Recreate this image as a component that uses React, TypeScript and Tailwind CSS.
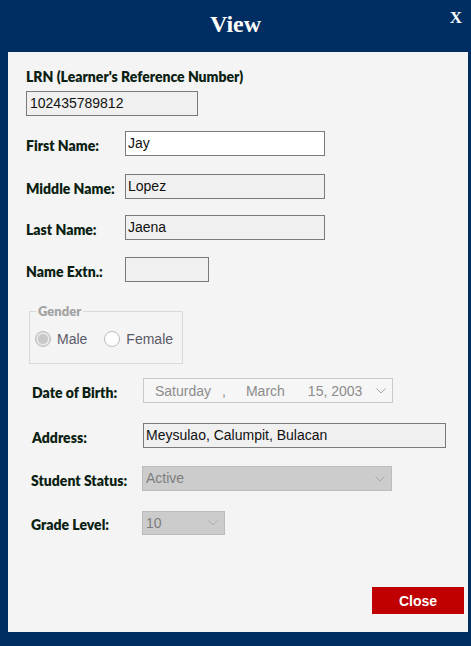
import React from 'react';

const labelCls = "font-['Lato','DejaVu_Sans',sans-serif] font-extrabold text-[14px] leading-[16px] text-[#0b1f12]";
const inputText = "font-['Liberation_Sans',Arial,sans-serif] text-[14px] text-[#111]";

const Chevron: React.FC<{ color?: string }> = ({ color = '#a8a8a8' }) => (
    <svg width="10" height="6" viewBox="0 0 10 6" className="shrink-0">
        <polyline points="0.5,0.5 5,5 9.5,0.5" fill="none" stroke={color} strokeWidth="1" />
    </svg>
);

const TextRow: React.FC<{ label: string; value: string; white?: boolean; width: string; top: string }> = ({ label, value, white, width, top }) => (
    <div className={`flex items-center h-[25px] ${top}`}>
        <div className={`${labelCls} w-[99px] pt-[5px]`}>{label}</div>
        <div className={`h-[25px] ${width} border border-[#7a7a7a] ${white ? 'bg-white' : 'bg-[#f0f0f0]'} px-[2px] flex items-center ${inputText}`}>
            {value}
        </div>
    </div>
);

const App: React.FC = () => {
    return (
        <div className="w-[471px] h-[646px] bg-[#002d62] flex flex-col overflow-hidden">
            {/* Title bar */}
            <div className="relative h-[52px] flex items-start justify-center shrink-0">
                <span className="mt-[10px] font-['Liberation_Serif','Times_New_Roman',serif] font-bold text-[24px] leading-[28px] text-white">
                    View
                </span>
                <button className="absolute right-[9px] top-[8px] font-['Liberation_Serif',serif] font-bold text-[17px] leading-[20px] text-white">
                    X
                </button>
            </div>

            {/* Body */}
            <div className="ml-[8px] w-[460px] h-[580px] bg-[#f4f4f4] flex flex-col pl-[18px]">
                <div className={`${labelCls} mt-[17px]`}>LRN (Learner's Reference Number)</div>
                <div className={`mt-[6px] h-[25px] w-[172px] border border-[#7a7a7a] bg-[#f0f0f0] px-[3px] flex items-center ${inputText}`}>
                    102435789812
                </div>

                <TextRow label="First Name:" value="Jay" white width="w-[200px]" top="mt-[15px]" />
                <TextRow label="Middle Name:" value="Lopez" width="w-[200px]" top="mt-[18px]" />
                <TextRow label="Last Name:" value="Jaena" width="w-[200px]" top="mt-[16px]" />
                <TextRow label="Name Extn.:" value="" width="w-[84px]" top="mt-[17px]" />

                {/* Gender */}
                <fieldset className="mt-[22px] ml-[3px] w-[154px] h-[60px] border border-[#d9d9d9]">
                    <legend className="ml-[6px] px-[2px] font-['Lato','DejaVu_Sans',sans-serif] font-extrabold text-[13px] leading-[15px] text-[#a3a3a3]">
                        Gender
                    </legend>
                    <div className="flex items-center h-[16px] mt-[12px] ml-[5px] font-['Liberation_Sans',Arial,sans-serif] text-[14px] text-[#5a5a68]">
                        <span className="w-[16px] h-[16px] rounded-full border border-[#bdbdbd] bg-[#c8c8c8] shadow-[inset_0_0_0_2px_#e6e6e6]" />
                        <span className="ml-[6px]">Male</span>
                        <span className="ml-[17px] w-[16px] h-[16px] rounded-full border border-[#bdbdbd] bg-white" />
                        <span className="ml-[6px]">Female</span>
                    </div>
                </fieldset>

                {/* Date of Birth */}
                <div className="flex items-center h-[25px] mt-[14px] ml-[6px]">
                    <div className={`${labelCls} w-[111px] pt-[5px]`}>Date of Birth:</div>
                    <div className="h-[25px] w-[250px] border border-[#c9c9c9] bg-[#f6f6f6] flex items-center pl-[11px] pr-[6px] pt-[1px] font-['Liberation_Sans',Arial,sans-serif] text-[14px] text-[#8c8c8c]">
                        <span>Saturday</span>
                        <span className="ml-[11px]">,</span>
                        <span className="ml-[20px]">March</span>
                        <span className="ml-[23px]">15, 2003</span>
                        <span className="ml-auto"><Chevron /></span>
                    </div>
                </div>

                {/* Address */}
                <div className="flex items-center h-[25px] mt-[20px] ml-[6px]">
                    <div className={`${labelCls} w-[111px] pt-[5px]`}>Address:</div>
                    <div className={`h-[25px] w-[303px] border border-[#7a7a7a] bg-[#f0f0f0] px-[2px] flex items-center ${inputText}`}>
                        Meysulao, Calumpit, Bulacan
                    </div>
                </div>

                {/* Student Status */}
                <div className="flex items-center h-[25px] mt-[18px] ml-[5px]">
                    <div className={`${labelCls} w-[111px] pt-[4px]`}>Student Status:</div>
                    <div className="h-[25px] w-[250px] border border-[#bcbcbc] bg-[#cccccc] flex items-center pl-[3px] pr-[6px] font-['Liberation_Sans',Arial,sans-serif] text-[14px] text-[#7d7d7d]">
                        <span>Active</span>
                        <span className="ml-auto"><Chevron color="#a9a9a9" /></span>
                    </div>
                </div>

                {/* Grade Level */}
                <div className="flex items-center h-[24px] mt-[20px] ml-[5px]">
                    <div className={`${labelCls} w-[111px] pt-[4px]`}>Grade Level:</div>
                    <div className="h-[24px] w-[83px] border border-[#bcbcbc] bg-[#cccccc] flex items-center pl-[3px] pr-[6px] font-['Liberation_Sans',Arial,sans-serif] text-[14px] text-[#7d7d7d]">
                        <span>10</span>
                        <span className="ml-auto"><Chevron color="#a9a9a9" /></span>
                    </div>
                </div>

                <button className="mt-auto mb-[18px] mr-[4px] self-end w-[92px] h-[27px] pt-[1px] bg-[#c00000] text-white font-['Liberation_Sans',Arial,sans-serif] font-bold text-[14px]">
                    Close
                </button>
            </div>
        </div>
    );
};

export default App;
